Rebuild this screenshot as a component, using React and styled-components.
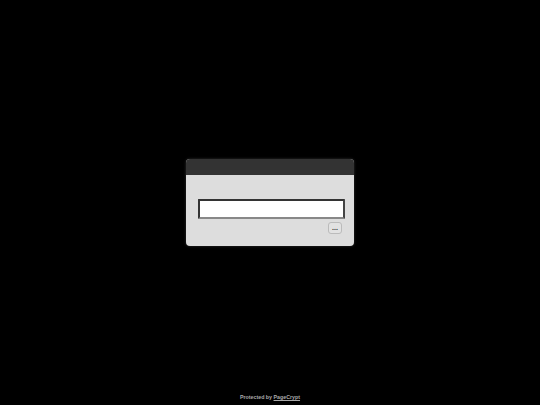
import React from 'react';
import styled, { createGlobalStyle } from 'styled-components';

const GlobalStyle = createGlobalStyle`
  html, body {
    margin: 0;
    padding: 0;
    background: #000;
    font-family: "Liberation Sans", Arial, sans-serif;
  }
`;

const Page = styled.div`
  height: 100vh;
  display: flex;
  flex-direction: column;
`;

const Center = styled.main`
  flex: 1;
  display: flex;
  align-items: center;
  justify-content: center;
  padding-top: 11px;
`;

const Dialog = styled.div`
  width: 168px;
  height: 87px;
  background: #dddddd;
  border-radius: 4px;
  overflow: hidden;
  box-shadow: 0 0 3px rgba(80, 80, 80, 0.6);
  display: flex;
  flex-direction: column;
`;

const Header = styled.div`
  height: 16px;
  background: #333333;
  flex-shrink: 0;
`;

const Body = styled.form`
  flex: 1;
  display: flex;
  flex-direction: column;
  align-items: flex-end;
  padding: 24px 9px 0 12px;
  gap: 3px;
`;

const Input = styled.input`
  box-sizing: border-box;
  width: 147px;
  height: 20px;
  margin: 0;
  padding: 0 2px;
  background: #fff;
  border: 2px solid #333;
  border-bottom-color: #888;
  border-right-color: #444;
  border-radius: 1px;
  outline: none;
  font-size: 10px;
  font-family: inherit;
  caret-color: #888;
`;

const Button = styled.button`
  box-sizing: border-box;
  width: 14px;
  height: 12px;
  margin: 0 3px 0 0;
  padding: 0;
  background: #e2e2e2;
  border: 1px solid #bbb;
  border-radius: 3px;
  color: #333;
  font-size: 7px;
  font-weight: bold;
  line-height: 8px;
  font-family: inherit;
`;

const Footer = styled.footer`
  text-align: center;
  color: #aaa;
  font-size: 5.3px;
  font-weight: bold;
  padding-bottom: 5px;
  a {
    color: #aaa;
    text-decoration: underline;
  }
`;

export default function App() {
  return (
    <Page>
      <GlobalStyle />
      <Center>
        <Dialog>
          <Header />
          <Body onSubmit={(e) => e.preventDefault()}>
            <Input type="password" autoFocus />
            <Button type="submit">...</Button>
          </Body>
        </Dialog>
      </Center>
      <Footer>
        Protected by <a href="#">PageCrypt</a>
      </Footer>
    </Page>
  );
}
